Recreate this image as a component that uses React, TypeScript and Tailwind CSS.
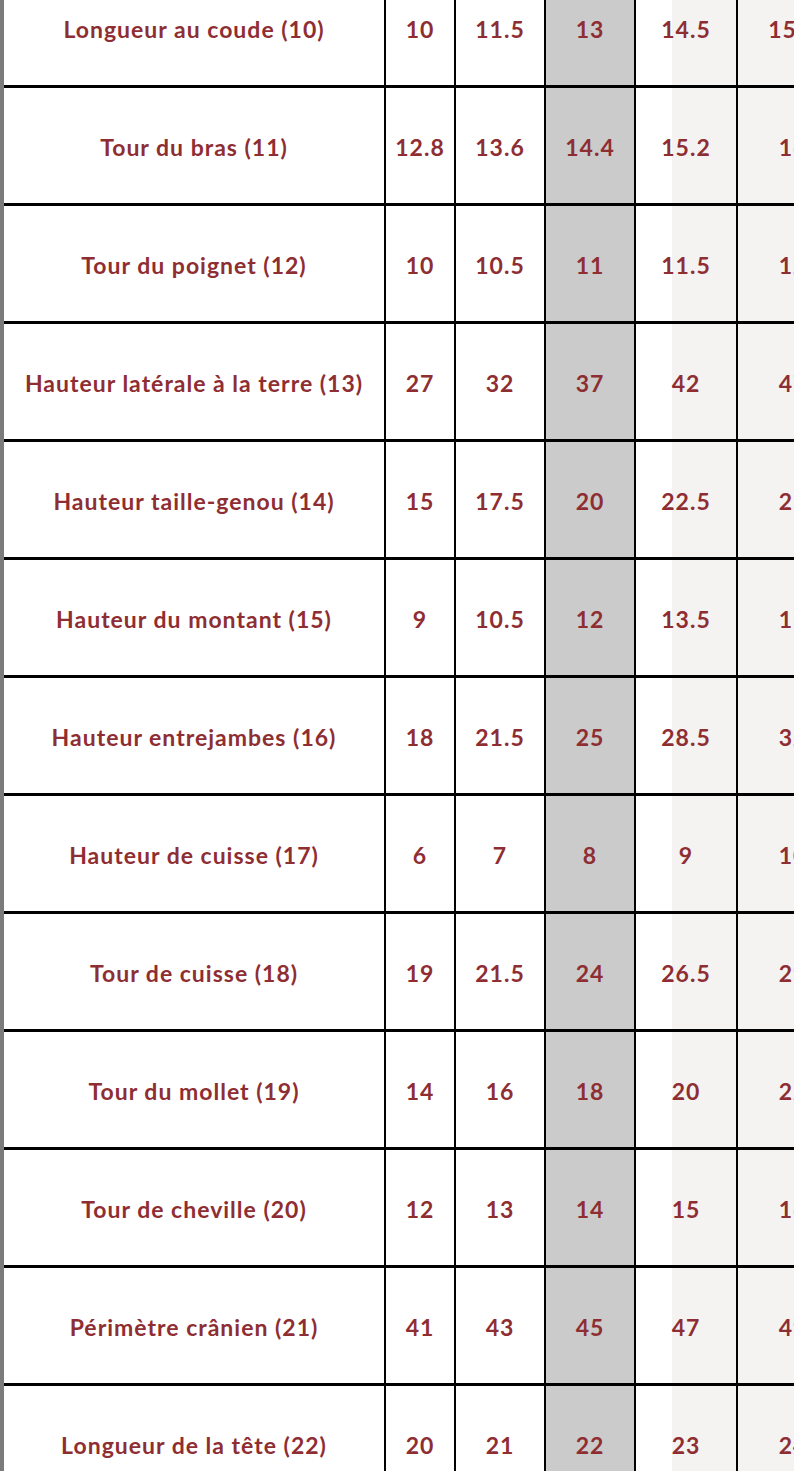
import React from "react";

const rows: [string, string, string, string, string, string][] = [
  ["Longueur au coude (10)", "10", "11.5", "13", "14.5", "15.5"],
  ["Tour du bras (11)", "12.8", "13.6", "14.4", "15.2", "16"],
  ["Tour du poignet (12)", "10", "10.5", "11", "11.5", "12"],
  ["Hauteur latérale à la terre (13)", "27", "32", "37", "42", "47"],
  ["Hauteur taille-genou (14)", "15", "17.5", "20", "22.5", "25"],
  ["Hauteur du montant (15)", "9", "10.5", "12", "13.5", "15"],
  ["Hauteur entrejambes (16)", "18", "21.5", "25", "28.5", "32"],
  ["Hauteur de cuisse (17)", "6", "7", "8", "9", "10"],
  ["Tour de cuisse (18)", "19", "21.5", "24", "26.5", "29"],
  ["Tour du mollet (19)", "14", "16", "18", "20", "22"],
  ["Tour de cheville (20)", "12", "13", "14", "15", "16"],
  ["Périmètre crânien (21)", "41", "43", "45", "47", "49"],
  ["Longueur de la tête (22)", "20", "21", "22", "23", "24"],
];

export default function App() {
  return (
    <div className="w-[794px] h-[1471px] overflow-hidden flex bg-white font-['Lato','Liberation_Sans',sans-serif] font-bold text-[23px] tracking-[1px] text-[#8e2e33]">
      <div className="w-[4px] shrink-0 bg-[#7b7b7b]" />
      <div className="flex-1 min-w-0 overflow-hidden bg-[linear-gradient(to_right,#ffffff_668px,#f4f3f2_668px)]">
        <div className="-mt-[30px] w-[844px]">
          {rows.map((r) => (
            <div key={r[0]} className="flex h-[118px] border-b-[3px] border-black">
              <div className="w-[382px] shrink-0 border-r-2 border-black flex items-center justify-center pt-[4px] whitespace-nowrap">
                {r[0]}
              </div>
              <div className="w-[70px] shrink-0 border-r-2 border-black flex items-center justify-center pt-[4px]">
                {r[1]}
              </div>
              <div className="w-[90px] shrink-0 border-r-2 border-black flex items-center justify-center pt-[4px]">
                {r[2]}
              </div>
              <div className="w-[90px] shrink-0 border-r-2 border-black bg-[#cbcbcb] flex items-center justify-center pt-[4px]">
                {r[3]}
              </div>
              <div className="w-[102px] shrink-0 border-r-2 border-black flex items-center justify-center pt-[4px]">
                {r[4]}
              </div>
              <div className="w-[110px] shrink-0 flex items-center justify-center pt-[4px]">
                {r[5]}
              </div>
            </div>
          ))}
        </div>
      </div>
    </div>
  );
}
